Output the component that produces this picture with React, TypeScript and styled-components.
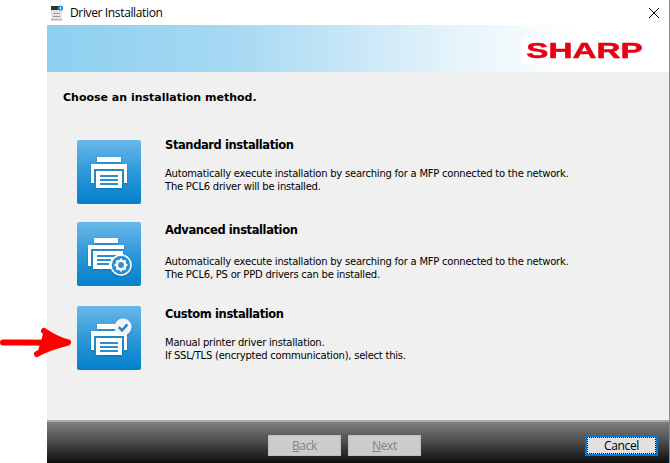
import styled, { createGlobalStyle } from "styled-components";

const GlobalStyle = createGlobalStyle`
    html, body {
        margin: 0;
        padding: 0;
        background: #fff;
    }
    body {
        width: 670px;
        height: 463px;
        overflow: hidden;
        position: relative;
    }
`;

const Page = styled.div`
    padding-left: 47px;
    height: 463px;
    box-sizing: border-box;
`;

const Window = styled.div`
    width: 623px;
    height: 463px;
    display: flex;
    flex-direction: column;
    box-sizing: border-box;
    border-right: 1px solid #8a8a8a;
`;

const TitleBar = styled.div`
    height: 25px;
    flex: none;
    display: flex;
    align-items: center;
    background: #fff;
    padding: 0 10px 0 3px;
    gap: 4px;
    font-family: "Open Sans", "Noto Sans", sans-serif;
    font-size: 12px;
    color: #000;
`;

const TitleText = styled.span`
    flex: 1;
    letter-spacing: -0.36px;
`;

const Banner = styled.div`
    height: 47px;
    flex: none;
    display: flex;
    align-items: center;
    justify-content: flex-end;
    padding-right: 21px;
    background: linear-gradient(90deg, #8dcff0 0%, #a6d9f2 30%, #c4e5f6 47%, #e6f4fb 66%, #ffffff 85%);
`;

const Logo = styled.div`
    width: 126px;
    height: 25px;
    margin-top: 4px;
    background: #fff;
    display: flex;
    align-items: center;
    justify-content: center;
`;

const LogoText = styled.span`
    font-family: "Liberation Sans", Arial, sans-serif;
    font-weight: 700;
    font-size: 22px;
    line-height: 21px;
    color: #e60012;
    -webkit-text-stroke: 0.5px #e60012;
    transform: scaleX(1.51);
`;

const Content = styled.div`
    flex: 1;
    background: #f0f0f0;
    padding: 19px 0 0 16px;
    font-family: "DejaVu Sans", Verdana, sans-serif;
    color: #000;
`;

const Lead = styled.div`
    font-weight: 700;
    font-size: 11px;
    line-height: 14px;
`;

const Options = styled.div`
    margin-top: 35px;
    padding-left: 14px;
    display: flex;
    flex-direction: column;
`;

const Option = styled.div<{ $mt?: number }>`
    display: flex;
    height: 64px;
    margin-top: ${(p) => p.$mt ?? 0}px;
`;

const Tile = styled.div`
    width: 64px;
    height: 64px;
    flex: none;
    border-radius: 2px;
    background: linear-gradient(180deg, #68b8e9 0%, #2f98d9 50%, #0380cb 100%);
`;

const OptionBody = styled.div<{ $shift: number }>`
    margin-left: 24px;
    margin-top: ${(p) => p.$shift}px;
`;

const OptionTitle = styled.div<{ $mb: number }>`
    font-weight: 700;
    font-size: 11.5px;
    line-height: 14px;
    letter-spacing: -0.4px;
    margin-bottom: ${(p) => p.$mb}px;
`;

const OptionText = styled.div`
    font-size: 10px;
    line-height: 13px;
    letter-spacing: -0.23px;
    white-space: nowrap;
`;

const Footer = styled.div`
    flex: none;
    height: 43px;
    box-sizing: border-box;
    border-top: 2px solid #a9a9a9;
    background: linear-gradient(180deg, #808080 0%, #4a4a4a 50%, #0e0e0e 100%);
    display: flex;
    gap: 7px;
    padding: 13px 11px 7px 221px;
    font-family: "Open Sans", "Noto Sans", sans-serif;
    font-size: 12px;
    letter-spacing: -0.35px;
`;

const Button = styled.div<{ $primary?: boolean }>`
    width: 73px;
    height: 21px;
    box-sizing: border-box;
    display: flex;
    align-items: center;
    justify-content: center;
    position: relative;
    color: ${(p) => (p.$primary ? "#000" : "#838383")};
    background: ${(p) => (p.$primary ? "#e1e1e1" : "#cccccc")};
    border: ${(p) => (p.$primary ? "2px solid #0078d7" : "1px solid #bfbfbf")};
    margin-left: ${(p) => (p.$primary ? "auto" : "0")};
    &::after {
        content: "";
        display: ${(p) => (p.$primary ? "block" : "none")};
        position: absolute;
        inset: 0;
        border: 1px dotted #000;
    }
    u {
        text-underline-offset: 1px;
    }
`;

const Arrow = styled.svg`
    position: absolute;
    left: 0;
    top: 325px;
`;

const PrinterBase = () => (
    <>
        <rect x="20" y="17" width="24" height="5" fill="#fff" />
        <path d="M14 24h36v19h-3V29H17v14h-3z" fill="#fff" />
    </>
);

const PrinterSheet = ({ x = 19, y = 31 }: { x?: number; y?: number }) => (
    <>
        <rect x={x} y={y} width="26" height="17" fill="#fff" />
        <g fill="#2a8fd2">
            <rect x={x + 4} y={y + 4} width="18" height="2" />
            <rect x={x + 4} y={y + 8} width="18" height="2" />
            <rect x={x + 4} y={y + 12} width="18" height="2" />
        </g>
    </>
);

const TileSvg = ({ children }: { children: React.ReactNode }) => (
    <svg width="64" height="64" viewBox="0 0 64 64">
        <defs>
            <filter id="soft" x="-20%" y="-20%" width="140%" height="140%">
                <feDropShadow dx="0" dy="1" stdDeviation="1" floodColor="#0a4f80" floodOpacity="0.45" />
            </filter>
        </defs>
        <g filter="url(#soft)">{children}</g>
    </svg>
);

const StandardIcon = () => (
    <TileSvg>
        <PrinterBase />
        <PrinterSheet />
    </TileSvg>
);

const AdvancedIcon = () => (
    <TileSvg>
        <rect x="17" y="16" width="24" height="5" fill="#fff" />
        <path d="M11 23h36v4H14v17h-3z" fill="#fff" />
        <path d="M16 29h30v18H16z" fill="#fff" />
        <g fill="#2a8fd2">
            <rect x="20" y="33" width="19" height="2" />
            <rect x="20" y="37" width="14" height="2" />
            <rect x="20" y="41" width="12" height="2" />
        </g>
        <circle cx="44" cy="43" r="10" fill="#2a8fd2" stroke="#fff" strokeWidth="1.5" />
        <circle cx="44" cy="43" r="4.2" fill="none" stroke="#fff" strokeWidth="2.6" />
        <path d="M44 36.5v2.5M44 47v2.5M37.5 43h2.5M48 43h2.5M39.4 38.4l1.8 1.8M46.8 45.8l1.8 1.8M39.4 47.6l1.8-1.8M46.8 40.2l1.8-1.8" stroke="#fff" strokeWidth="2" />
    </TileSvg>
);

const CustomIcon = () => (
    <TileSvg>
        <rect x="20" y="18" width="24" height="5" fill="#fff" />
        <path d="M14 25h36v19h-3V30H17v14h-3z" fill="#fff" />
        <PrinterSheet y={32} />
        <circle cx="46" cy="21" r="8.5" fill="#f2f5f8" />
        <path d="M41.8 21.2l3.2 3.2 5.4-6" fill="none" stroke="#2a80c4" strokeWidth="2.4" />
    </TileSvg>
);

const WindowIcon = () => (
    <svg width="16" height="16" viewBox="0 0 16 16">
        <rect x="1" y="1" width="9" height="4" fill="#333" />
        <rect x="1" y="5" width="11" height="10" fill="#e4e4e4" />
        <rect x="3" y="8" width="7" height="1" fill="#9a9a9a" />
        <rect x="3" y="11" width="7" height="1" fill="#9a9a9a" />
        <rect x="1" y="14" width="11" height="1.5" fill="#b5b5b5" />
        <circle cx="10.5" cy="3" r="2.6" fill="#1c8fe0" />
        <rect x="10" y="2" width="1" height="2" fill="#fff" />
    </svg>
);

const CloseIcon = () => (
    <svg width="10" height="10" viewBox="0 0 10 10">
        <path d="M0 0l10 10M10 0L0 10" stroke="#000" strokeWidth="1" fill="none" />
    </svg>
);

const App = () => {
    return (
        <Page>
            <GlobalStyle />
            <Window>
                <TitleBar>
                    <WindowIcon />
                    <TitleText>Driver Installation</TitleText>
                    <CloseIcon />
                </TitleBar>
                <Banner>
                    <Logo>
                        <LogoText>SHARP</LogoText>
                    </Logo>
                </Banner>
                <Content>
                    <Lead>Choose an installation method.</Lead>
                    <Options>
                        <Option>
                            <Tile><StandardIcon /></Tile>
                            <OptionBody $shift={-2}>
                                <OptionTitle $mb={15}>Standard installation</OptionTitle>
                                <OptionText>Automatically execute installation by searching for a MFP connected to the network.</OptionText>
                                <OptionText>The PCL6 driver will be installed.</OptionText>
                            </OptionBody>
                        </Option>
                        <Option $mt={18}>
                            <Tile><AdvancedIcon /></Tile>
                            <OptionBody $shift={1}>
                                <OptionTitle $mb={18}>Advanced installation</OptionTitle>
                                <OptionText>Automatically execute installation by searching for a MFP connected to the network.</OptionText>
                                <OptionText>The PCL6, PS or PPD drivers can be installed.</OptionText>
                            </OptionBody>
                        </Option>
                        <Option $mt={20}>
                            <Tile><CustomIcon /></Tile>
                            <OptionBody $shift={1}>
                                <OptionTitle $mb={15}>Custom installation</OptionTitle>
                                <OptionText>Manual printer driver installation.</OptionText>
                                <OptionText>If SSL/TLS (encrypted communication), select this.</OptionText>
                            </OptionBody>
                        </Option>
                    </Options>
                </Content>
                <Footer>
                    <Button><span><u>B</u>ack</span></Button>
                    <Button><span><u>N</u>ext</span></Button>
                    <Button $primary>Cancel</Button>
                </Footer>
            </Window>
            <Arrow width="72" height="36" viewBox="0 0 72 36">
                <path d="M3 17.5C25 17.5 48 18 66 17.5M44 6C51 11 59 15 68 17.5C58 20 47 23 37 29" fill="#fe0000" stroke="#fe0000" strokeWidth="6" strokeLinecap="round" strokeLinejoin="round" />
            </Arrow>
        </Page>
    );
};

export default App;
